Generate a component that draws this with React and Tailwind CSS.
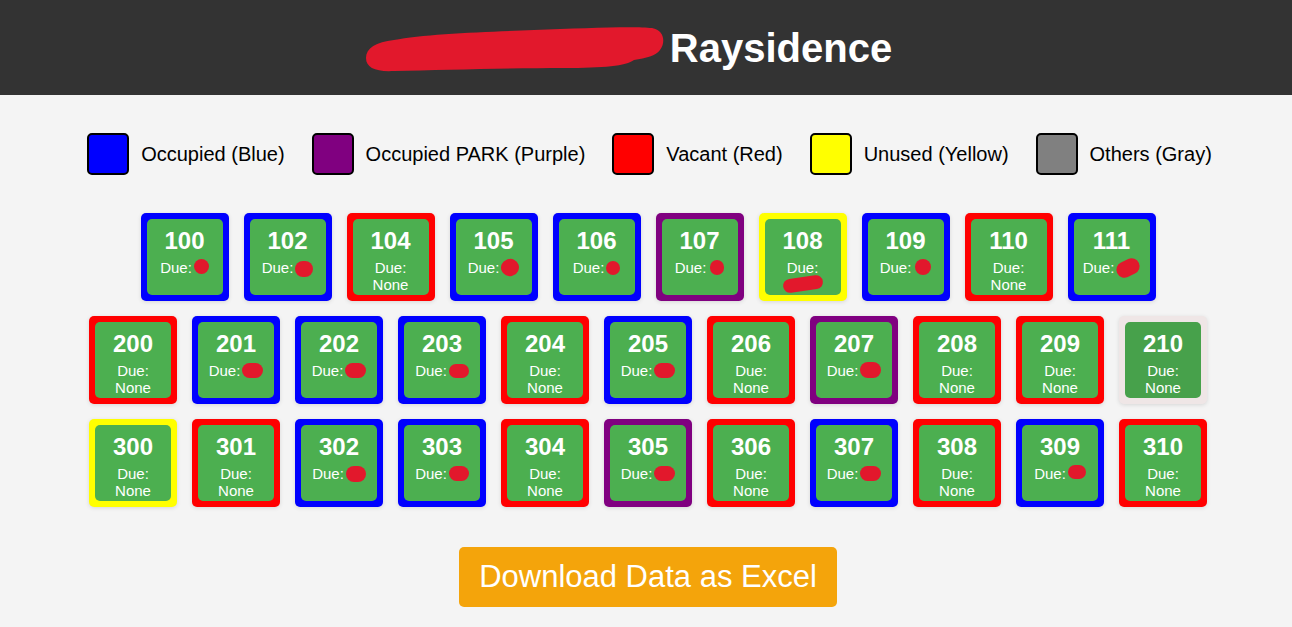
// App.jsx - Raysidence unit board

const legend = [
  { label: "Occupied (Blue)", color: "bg-[#0000ff]" },
  { label: "Occupied PARK (Purple)", color: "bg-[#800080]" },
  { label: "Vacant (Red)", color: "bg-[#ff0000]" },
  { label: "Unused (Yellow)", color: "bg-[#ffff00]" },
  { label: "Others (Gray)", color: "bg-[#808080]" },
];

const frame = {
  blue: "bg-[#0000ff]",
  purple: "bg-[#800080]",
  red: "bg-[#ff0000]",
  yellow: "bg-[#ffff00]",
  other: "bg-[#efe6e6]",
};

// blob = redacted due value
const floors = [
  [
    { no: 100, s: "blue", blob: "w-[15px] h-[15px] -translate-y-[1px]" },
    { no: 102, s: "blue", blob: "w-[18px] h-[16px] translate-y-[1px]" },
    { no: 104, s: "red" },
    { no: 105, s: "blue", blob: "w-[18px] h-[17px] rotate-[-20deg]" },
    { no: 106, s: "blue", blob: "w-[14px] h-[14px]" },
    { no: 107, s: "purple", blob: "w-[14px] h-[15px] ml-[4px]" },
    { no: 108, s: "yellow", blob: "w-[40px] h-[14px] rotate-[-8deg]", wrap: true },
    { no: 109, s: "blue", blob: "w-[16px] h-[16px] ml-[4px] -translate-y-[1px]" },
    { no: 110, s: "red" },
    { no: 111, s: "blue", blob: "w-[24px] h-[16px] rotate-[-25deg]" },
  ],
  [
    { no: 200, s: "red" },
    { no: 201, s: "blue", blob: "w-[21px] h-[15px]" },
    { no: 202, s: "blue", blob: "w-[21px] h-[15px]" },
    { no: 203, s: "blue", blob: "w-[20px] h-[14px]" },
    { no: 204, s: "red" },
    { no: 205, s: "blue", blob: "w-[21px] h-[15px]" },
    { no: 206, s: "red" },
    { no: 207, s: "purple", blob: "w-[21px] h-[16px] -translate-y-[1px]" },
    { no: 208, s: "red" },
    { no: 209, s: "red" },
    { no: 210, s: "other" },
  ],
  [
    { no: 300, s: "yellow" },
    { no: 301, s: "red" },
    { no: 302, s: "blue", blob: "w-[20px] h-[16px]" },
    { no: 303, s: "blue", blob: "w-[20px] h-[15px]" },
    { no: 304, s: "red" },
    { no: 305, s: "purple", blob: "w-[21px] h-[15px]" },
    { no: 306, s: "red" },
    { no: 307, s: "blue", blob: "w-[21px] h-[15px]" },
    { no: 308, s: "red" },
    { no: 309, s: "blue", blob: "w-[18px] h-[14px] -translate-y-[2px]" },
    { no: 310, s: "red" },
  ],
];

function Header() {
  return (
    <header className="bg-[#333333] h-[95px] flex items-center justify-center">
      <h1 className="flex items-center text-white text-[40px] font-bold leading-none">
        <svg width="300" height="46" viewBox="0 0 300 46" className="ml-[-36px] mr-[6px] translate-y-[1px]">
          <path
            d="M2 32 C2 22 12 16 30 14 C60 8 120 6 170 4 C220 2 270 0 288 2 C300 4 302 16 296 24 C292 30 282 32 270 34 C262 40 240 42 200 42 C150 42 80 44 30 45 C12 46 2 42 2 32 Z"
            fill="#e2182c"
          />
        </svg>
        <span>Raysidence</span>
      </h1>
    </header>
  );
}

function Legend() {
  return (
    <div className="flex justify-center items-center gap-[27px] mt-[38px] pl-[7px]">
      {legend.map((l) => (
        <div key={l.label} className="flex items-center gap-[12px]">
          <span className={`w-[42px] h-[42px] border-2 border-black rounded-[5px] ${l.color}`} />
          <span className="text-[20px] text-black">{l.label}</span>
        </div>
      ))}
    </div>
  );
}

function UnitCard({ unit }) {
  const isOther = unit.s === "other";
  return (
    <div className={`w-[88px] h-[88px] rounded-[5px] p-[6px] shadow-[0_1px_4px_rgba(0,0,0,0.12)] ${frame[unit.s]}`}>
      <div
        className={`h-full rounded-[5px] flex flex-col items-center pt-[8px] px-[6px] text-white text-center ${
          isOther ? "bg-[#47a14b]" : "bg-[#4caf50]"
        }`}
      >
        <div className="text-[24px] font-bold leading-[27px] mb-[5px]">{unit.no}</div>
        {unit.blob ? (
          unit.wrap ? (
            <div className="text-[15px] leading-[17px] flex flex-col items-center">
              <span>Due:</span>
              <span className={`block rounded-full bg-[#e2182c] mt-[1px] ${unit.blob}`} />
            </div>
          ) : (
            <div className="text-[15px] leading-[17px] flex items-center">
              <span>Due:</span>
              <span className={`inline-block rounded-full bg-[#e2182c] ml-[2px] ${unit.blob}`} />
            </div>
          )
        ) : (
          <div className="text-[15px] leading-[17px]">Due: None</div>
        )}
      </div>
    </div>
  );
}

export default function App() {
  return (
    <div className="min-h-screen bg-[#f4f4f4] font-['Liberation_Sans',Arial,sans-serif]">
      <Header />
      <Legend />
      <div className="flex flex-col gap-[15px] mt-[38px]">
        {floors.map((row, i) => (
          <div key={i} className="flex justify-center gap-[15px] pl-[4px]">
            {row.map((u) => (
              <UnitCard key={u.no} unit={u} />
            ))}
          </div>
        ))}
      </div>
      <div className="flex justify-center mt-[40px] pb-[20px] pl-[4px]">
        <button className="h-[60px] px-[20px] rounded-[5px] bg-[#f4a40b] text-white text-[31px]">
          Download Data as Excel
        </button>
      </div>
    </div>
  );
}
